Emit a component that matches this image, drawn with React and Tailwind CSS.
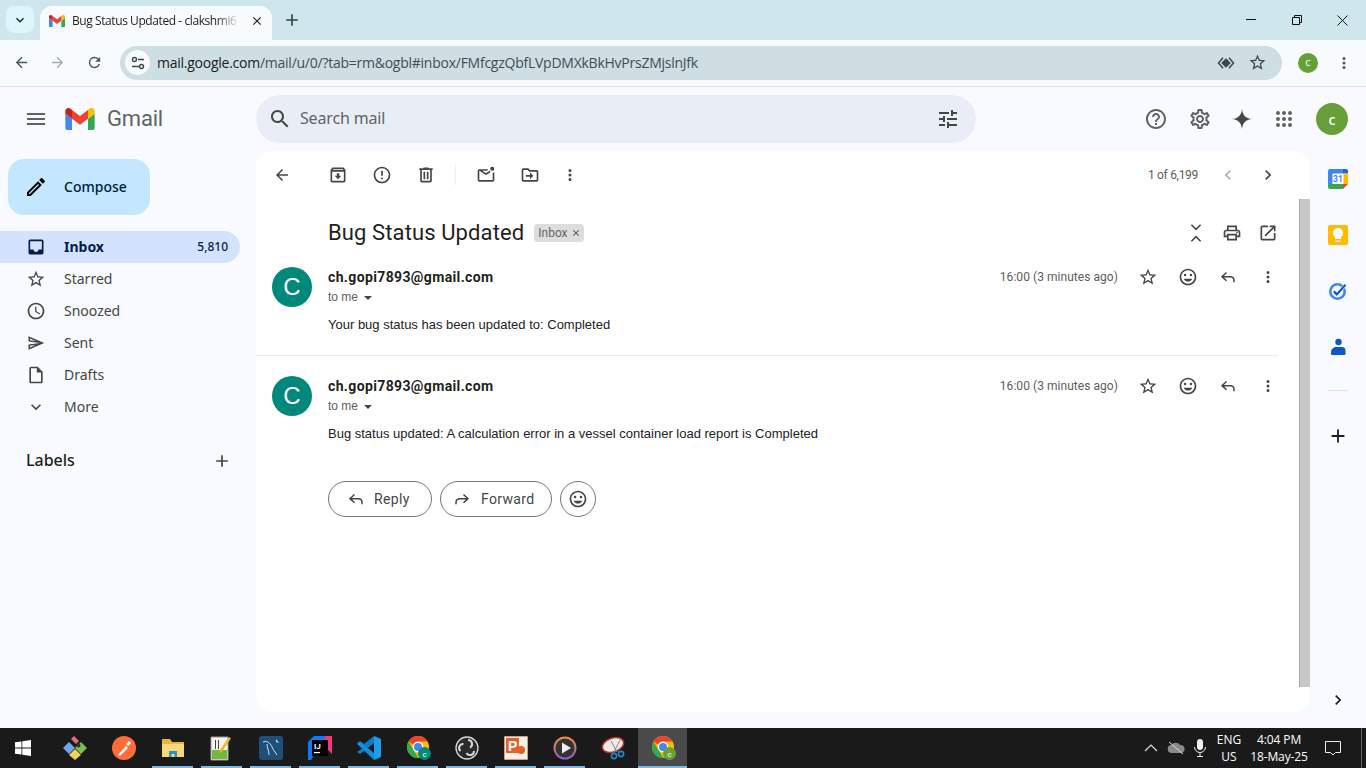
const P = {
  menu: "M3 18h18v-2H3v2zm0-5h18v-2H3v2zm0-7v2h18V6H3z",
  search: "M15.5 14h-.79l-.28-.27C15.41 12.59 16 11.11 16 9.5 16 5.91 13.09 3 9.5 3S3 5.91 3 9.5 5.91 16 9.5 16c1.61 0 3.09-.59 4.23-1.57l.27.28v.79l5 4.99L20.49 19l-4.99-5zm-6 0C7.01 14 5 11.99 5 9.5S7.01 5 9.5 5 14 7.01 14 9.5 11.99 14 9.5 14z",
  tune: "M3 17v2h6v-2H3zM3 5v2h10V5H3zm10 16v-2h8v-2h-8v-2h-2v6h2zM7 9v2H3v2h4v2h2V9H7zm14 4v-2H11v2h10zm-6-4h2V7h4V5h-4V3h-2v6z",
  help: "M11 18h2v-2h-2v2zm1-16C6.48 2 2 6.48 2 12s4.48 10 10 10 10-4.48 10-10S17.52 2 12 2zm0 18c-4.41 0-8-3.59-8-8s3.59-8 8-8 8 3.59 8 8-3.59 8-8 8zm0-14c-2.21 0-4 1.79-4 4h2c0-1.1.9-2 2-2s2 .9 2 2c0 2-3 1.75-3 5h2c0-2.25 3-2.5 3-5 0-2.21-1.79-4-4-4z",
  settings: "M19.43 12.98c.04-.32.07-.64.07-.98 0-.34-.03-.66-.07-.98l2.11-1.65c.19-.15.24-.42.12-.64l-2-3.46c-.09-.16-.26-.25-.44-.25-.06 0-.12.01-.17.03l-2.49 1c-.52-.4-1.08-.73-1.69-.98l-.38-2.65C14.46 2.18 14.25 2 14 2h-4c-.25 0-.46.18-.49.42l-.38 2.65c-.61.25-1.17.59-1.69.98l-2.49-1c-.06-.02-.12-.03-.18-.03-.17 0-.34.09-.43.25l-2 3.46c-.13.22-.07.49.12.64l2.11 1.65c-.04.32-.07.65-.07.98 0 .33.03.66.07.98l-2.11 1.65c-.19.15-.24.42-.12.64l2 3.46c.09.16.26.25.44.25.06 0 .12-.01.17-.03l2.49-1c.52.4 1.08.73 1.69.98l.38 2.65c.03.24.24.42.49.42h4c.25 0 .46-.18.49-.42l.38-2.65c.61-.25 1.17-.59 1.69-.98l2.49 1c.06.02.12.03.18.03.17 0 .34-.09.43-.25l2-3.46c.12-.22.07-.49-.12-.64l-2.11-1.65zm-1.98-1.71c.04.31.05.52.05.73 0 .21-.02.43-.05.73l-.14 1.13.89.7 1.08.84-.7 1.21-1.27-.51-1.04-.42-.9.68c-.43.32-.84.56-1.25.73l-1.06.43-.16 1.13-.2 1.35h-1.4l-.19-1.35-.16-1.13-1.06-.43c-.43-.18-.83-.41-1.23-.71l-.91-.7-1.06.43-1.27.51-.7-1.21 1.08-.84.89-.7-.14-1.13c-.03-.31-.05-.54-.05-.74s.02-.43.05-.73l.14-1.13-.89-.7-1.08-.84.7-1.21 1.27.51 1.04.42.9-.68c.43-.32.84-.56 1.25-.73l1.06-.43.16-1.13.2-1.35h1.39l.19 1.35.16 1.13 1.06.43c.43.18.83.41 1.23.71l.91.7 1.06-.43 1.27-.51.7 1.21-1.07.85-.89.7.14 1.13zM12 8c-2.21 0-4 1.79-4 4s1.79 4 4 4 4-1.79 4-4-1.79-4-4-4zm0 6c-1.1 0-2-.9-2-2s.9-2 2-2 2 .9 2 2-.9 2-2 2z",
  spark: "M12 1C12.6 7.8 16.2 11.4 23 12 16.2 12.6 12.6 16.2 12 23 11.4 16.2 7.8 12.6 1 12 7.8 11.4 11.4 7.8 12 1Z",
  back: "M20 11H7.83l5.59-5.59L12 4l-8 8 8 8 1.41-1.41L7.83 13H20v-2z",
  forward: "M4 11h12.17l-5.59-5.59L12 4l8 8-8 8-1.41-1.41L16.17 13H4v-2z",
  reload: "M17.65 6.35A7.96 7.96 0 0 0 12 4a8 8 0 1 0 7.73 10h-2.08A6 6 0 1 1 12 6c1.66 0 3.14.69 4.22 1.78L13 11h7V4l-2.35 2.35z",
  archive: "M20.54 5.23l-1.39-1.68C18.88 3.21 18.47 3 18 3H6c-.47 0-.88.21-1.16.55L3.46 5.23C3.17 5.57 3 6.02 3 6.5V19c0 1.1.9 2 2 2h14c1.1 0 2-.9 2-2V6.5c0-.48-.17-.93-.46-1.27zM6.24 5h11.52l.83 1H5.42l.82-1zM5 19V8h14v11H5zm8.45-9h-2.9v3H8l4 4 4-4h-2.55z",
  report: "M11 15h2v2h-2zm0-8h2v6h-2zm.99-5C6.47 2 2 6.48 2 12s4.47 10 9.99 10C17.52 22 22 17.52 22 12S17.52 2 11.99 2zM12 20c-4.42 0-8-3.58-8-8s3.58-8 8-8 8 3.58 8 8-3.58 8-8 8z",
  del: "M15 4V3H9v1H4v2h1v13c0 1.1.9 2 2 2h10c1.1 0 2-.9 2-2V6h1V4h-5zm2 15H7V6h10v13zM9 8h2v9H9zm4 0h2v9h-2z",
  unread: "M20 9v9H4V7h10V5H4c-1.1 0-2 .9-2 2v11c0 1.1.9 2 2 2h16c1.1 0 2-.9 2-2V9h-2zM4 7l8 5 5-3.1V6.6L12 9.7 4 5v2zm15.5-5a2.5 2.5 0 1 0 0 5 2.5 2.5 0 0 0 0-5z",
  move: "M20 6h-8l-2-2H4c-1.1 0-2 .9-2 2v12c0 1.1.9 2 2 2h16c1.1 0 2-.9 2-2V8c0-1.1-.9-2-2-2zm0 12H4V6h5.17l2 2H20v10zm-8-1v-3H7v-2h5V9l4 4-4 4z",
  more: "M12 8a2 2 0 1 0 0-4 2 2 0 0 0 0 4zm0 2a2 2 0 1 0 0 4 2 2 0 0 0 0-4zm0 6a2 2 0 1 0 0 4 2 2 0 0 0 0-4z",
  left: "M15.41 7.41L14 6l-6 6 6 6 1.41-1.41L10.83 12z",
  right: "M8.59 16.59L10 18l6-6-6-6-1.41 1.41L13.17 12z",
  down: "M7.41 8.59L12 13.17l4.59-4.58L18 10l-6 6-6-6z",
  print: "M19 8h-1V3H6v5H5c-1.66 0-3 1.34-3 3v6h4v4h12v-4h4v-6c0-1.66-1.34-3-3-3zM8 5h8v3H8V5zm8 14H8v-4h8v4zm4-4h-2v-2H6v2H4v-4c0-.55.45-1 1-1h14c.55 0 1 .45 1 1v4zm-2-4.5a1 1 0 1 0 0 2 1 1 0 0 0 0-2z",
  open: "M19 19H5V5h7V3H5c-1.11 0-2 .9-2 2v14c0 1.1.89 2 2 2h14c1.1 0 2-.9 2-2v-7h-2v7zM14 3v2h3.59l-9.83 9.83 1.41 1.41L19 6.41V10h2V3h-7z",
  star: "M22 9.24l-7.19-.62L12 2 9.19 8.63 2 9.24l5.46 4.73L5.82 21 12 17.27 18.18 21l-1.63-7.03L22 9.24zM12 15.4l-3.76 2.27 1-4.28-3.32-2.88 4.38-.38L12 6.1l1.71 4.04 4.38.38-3.32 2.88 1 4.28L12 15.4z",
  smile: "M12 2C6.47 2 2 6.48 2 12s4.47 10 10 10 10-4.48 10-10S17.53 2 12 2zm0 18c-4.42 0-8-3.58-8-8s3.58-8 8-8 8 3.58 8 8-3.58 8-8 8zM8.5 8a1.5 1.5 0 1 0 0 3 1.5 1.5 0 0 0 0-3zm7 0a1.5 1.5 0 1 0 0 3 1.5 1.5 0 0 0 0-3zM12 17.5c2.33 0 4.31-1.46 5.11-3.5H6.89c.8 2.04 2.78 3.5 5.11 3.5z",
  clock: "M11.99 2C6.47 2 2 6.48 2 12s4.47 10 9.99 10C17.52 22 22 17.52 22 12S17.52 2 11.99 2zM12 20c-4.42 0-8-3.58-8-8s3.58-8 8-8 8 3.58 8 8-3.58 8-8 8zm.5-13H11v6l5.25 3.15.75-1.23-4.5-2.67z",
  inbox: "M19 3H5c-1.1 0-2 .9-2 2v14c0 1.1.9 2 2 2h14c1.1 0 2-.9 2-2V5c0-1.1-.9-2-2-2zm0 12h-4c0 1.66-1.35 3-3 3s-3-1.34-3-3H5V5h14v10z",
  sent: "M4.01 6.03l7.51 3.22-7.52-1 .01-2.22m7.5 8.72L4 17.97v-2.22l7.51-1M2.01 3L2 10l15 2-15 2 .01 7L23 12 2.01 3z",
  draft: "M14 2H6c-1.1 0-1.99.9-1.99 2L4 20c0 1.1.89 2 1.99 2H18c1.1 0 2-.9 2-2V8l-6-6zM6 20V4h7v5h5v11H6z",
  edit: "M14.06 9.02l.92.92L5.92 19H5v-.92l9.06-9.06M17.66 3c-.25 0-.51.1-.7.29l-1.83 1.83 3.75 3.75 1.83-1.83c.39-.39.39-1.02 0-1.41l-2.34-2.34c-.2-.2-.45-.29-.71-.29zm-3.6 3.19L3 17.25V21h3.75L17.81 9.94l-3.75-3.75z",
  plus: "M19 13h-6v6h-2v-6H5v-2h6V5h2v6h6v2z",
  close: "M19 6.41L17.59 5 12 10.59 6.41 5 5 6.41 10.59 12 5 17.59 6.41 19 12 13.41 17.59 19 19 17.59 13.41 12z",
  apps: "M6 8a2 2 0 1 0 0-4 2 2 0 0 0 0 4zm6 12a2 2 0 1 0 0-4 2 2 0 0 0 0 4zm-6 0a2 2 0 1 0 0-4 2 2 0 0 0 0 4zm0-6a2 2 0 1 0 0-4 2 2 0 0 0 0 4zm6 0a2 2 0 1 0 0-4 2 2 0 0 0 0 4zm6-10a2 2 0 1 0 0 4 2 2 0 0 0 0-4zm-6 4a2 2 0 1 0 0-4 2 2 0 0 0 0 4zm6 6a2 2 0 1 0 0-4 2 2 0 0 0 0 4zm0 6a2 2 0 1 0 0-4 2 2 0 0 0 0 4z",
};

function Icon({ d, size = 20, className = "" }) {
  return (
    <svg width={size} height={size} viewBox="0 0 24 24" fill="currentColor" className={`shrink-0 ${className}`}>
      <path d={d} />
    </svg>
  );
}

function Box({ d, className = "w-10", size = 20, color = "text-[#444746]" }) {
  return (
    <div className={`flex h-10 items-center justify-center ${className} ${color}`}>
      <Icon d={d} size={size} />
    </div>
  );
}

function ReplyIcon({ size = 20, flip = false, className = "" }) {
  return (
    <svg width={size} height={size} viewBox="0 0 24 24" fill="none" stroke="currentColor" strokeWidth="2" className={`shrink-0 ${flip ? "-scale-x-100" : ""} ${className}`}>
      <path d="M10 6l-6 5.5 6 5.5M4 11.5h11c3 0 5 2 5 5V19" />
    </svg>
  );
}

function GmailM({ className }) {
  return (
    <svg viewBox="52 42 88 66" className={className}>
      <path fill="#4285f4" d="M58 108h14V74L52 59v43c0 3.32 2.69 6 6 6" />
      <path fill="#34a853" d="M120 108h14c3.32 0 6-2.69 6-6V59l-20 15" />
      <path fill="#fbbc04" d="M120 48v26l20-15v-8c0-7.42-8.47-11.65-14.4-7.2" />
      <path fill="#ea4335" d="M72 74V48l24 18 24-18v26L96 92" />
      <path fill="#c5221f" d="M52 51v8l20 15V48l-5.6-4.2c-5.94-4.45-14.4-.22-14.4 7.2" />
    </svg>
  );
}

function TopBar() {
  return (
    <div className="flex h-10 shrink-0 items-end bg-[#cfe6ec] font-['Open_Sans',sans-serif]">
      <div className="mb-[7px] ml-[6px] flex h-[27px] w-[28px] items-center justify-center rounded-lg bg-[#dcf6fc] text-[#1f1f1f]">
        <Icon d={P.down} size={16} />
      </div>
      <div className="ml-[6px] flex h-[34px] w-[232px] items-center rounded-t-xl bg-[#f7fbfe] pb-[5px] pl-[9px] pr-[8px]">
        <GmailM className="h-[12px] w-[16px] shrink-0" />
        <span className="ml-[7px] w-[168px] shrink-0 whitespace-nowrap text-[12px] tracking-[-0.42px] text-[#1f1f1f] [mask-image:linear-gradient(to_right,black_86%,transparent)]">
          Bug Status Updated - clakshmi6
        </span>
        <Icon d={P.close} size={14} className="ml-[10px] text-[#1f1f1f]" />
      </div>
      <div className="mb-[10px] ml-[10px] text-[#374548]">
        <Icon d={P.plus} size={20} />
      </div>
      <div className="ml-auto flex h-full items-start pb-px text-[#111]">
        <div className="flex h-[38px] w-[46px] items-center justify-center">
          <div className="h-px w-[10px] bg-[#111]" />
        </div>
        <div className="flex h-10 w-[46px] items-center justify-center">
          <svg width="10" height="10" viewBox="0 0 10 10" fill="none" stroke="currentColor">
            <path d="M.5 2.5h7v7h-7zM2.5 2.5v-2h7v7h-2" />
          </svg>
        </div>
        <div className="flex h-10 w-[46px] items-center justify-center pr-px">
          <svg width="11" height="11" viewBox="0 0 11 11" fill="none" stroke="currentColor">
            <path d="M.5.5l10 10M10.5.5l-10 10" />
          </svg>
        </div>
      </div>
    </div>
  );
}

function AddressBar() {
  return (
    <div className="flex h-[47px] shrink-0 items-center rounded-tl-lg border-b border-[#d9e5e9] bg-[#f7fbfe] pb-px font-['Open_Sans',sans-serif]">
      <Icon d={P.back} size={17} className="ml-[13px] text-[#46585c]" />
      <Icon d={P.forward} size={17} className="ml-[19px] text-[#a4acae]" />
      <Icon d={P.reload} size={17} className="ml-[20px] text-[#46585c]" />
      <div className="ml-[17px] flex h-[34px] w-[1162px] items-center rounded-full bg-[#cfdee3] pl-[5px] pr-[15px]">
        <div className="flex h-[25px] w-[25px] items-center justify-center rounded-full bg-[#f7fbfe] text-[#3c4a4e]">
          <svg width="16" height="16" viewBox="0 0 16 16" fill="none" stroke="currentColor" strokeWidth="1.4">
            <circle cx="4.5" cy="4.5" r="2" />
            <circle cx="11.5" cy="11.5" r="2" />
            <path d="M8 4.5h6M2 11.5h7" />
          </svg>
        </div>
        <div className="ml-[7px] whitespace-nowrap text-[14px] leading-5 tracking-[-0.25px] text-[#3f4f53]">
          <span className="text-[#162124]">mail.google.com</span>/mail/u/0/?tab=rm&amp;ogbl#inbox/FMfcgzQbfLVpDMXkBkHvPrsZMjslnJfk
        </div>
        <svg width="18" height="18" viewBox="0 0 24 24" fill="none" stroke="#3c4a4e" strokeWidth="2" className="ml-auto">
          <path d="M8 5L2 12l6 7M16 5l6 7-6 7" />
          <path d="M12 7l5 5-5 5-5-5z" fill="#3c4a4e" />
        </svg>
        <Icon d={P.star} size={19} className="ml-[13px] text-[#3c4a4e]" />
      </div>
      <div className="ml-[16px] flex h-5 w-5 items-center justify-center rounded-full bg-[#689f38] text-[11px] text-white">c</div>
      <Icon d={P.more} size={18} className="ml-[17px] text-[#46585c]" />
    </div>
  );
}

function GmailHeader() {
  return (
    <div className="flex h-16 shrink-0 items-center">
      <Icon d={P.menu} size={24} className="ml-6 text-[#5f6368]" />
      <GmailM className="ml-[17px] h-[22px] w-[30px]" />
      <span className="ml-3 font-['Roboto',sans-serif] text-[22px] leading-none tracking-[-0.2px] text-[#5f6368]">Gmail</span>
      <div className="ml-[93px] flex h-12 w-[720px] items-center rounded-3xl bg-[#e9eef6] pl-[12px] pr-[16px]">
        <Icon d={P.search} size={24} className="text-[#444746]" />
        <span className="ml-[8px] pb-[2px] text-[16px] tracking-[-0.15px] text-[#5f6368]">Search mail</span>
        <Icon d={P.tune} size={24} className="ml-auto text-[#444746]" />
      </div>
      <Icon d={P.help} size={24} className="ml-[168px] text-[#5f6368]" />
      <Icon d={P.settings} size={24} className="ml-5 text-[#5f6368]" />
      <Icon d={P.spark} size={22} className="ml-[19px] text-[#444746]" />
      <Icon d={P.apps} size={24} className="ml-[19px] text-[#5f6368]" />
      <div className="ml-5 flex h-8 w-8 items-center justify-center rounded-full bg-[#689f38] text-[14px] font-medium text-white">c</div>
    </div>
  );
}

const navItems = [
  { label: "Starred", d: P.star },
  { label: "Snoozed", d: P.clock },
  { label: "Sent", d: P.sent },
  { label: "Drafts", d: P.draft },
  { label: "More", d: P.down },
];

function Sidebar() {
  return (
    <div className="w-64 shrink-0 pt-2">
      <div className="ml-2 flex h-14 w-[142px] items-center rounded-2xl bg-[#c2e7ff] pl-4 text-[14px] font-medium text-[#001d35]">
        <Icon d={P.edit} size={24} className="text-black" />
        <span className="ml-4 pb-[2px]">Compose</span>
      </div>
      <div className="mt-4 w-60">
        <div className="flex h-8 items-center rounded-r-full bg-[#d3e3fd] pl-[26px] pr-3 text-[#041e49]">
          <Icon d={P.inbox} size={20} />
          <span className="ml-[18px] pb-[2px] text-[14px] font-bold">Inbox</span>
          <span className="ml-auto text-[12px] font-medium">5,810</span>
        </div>
        {navItems.map((item) => (
          <div key={item.label} className="flex h-8 items-center pl-[26px] text-[#444746]">
            <Icon d={item.d} size={item.label === "Sent" ? 18 : 20} className={item.label === "Sent" ? "mx-px" : ""} />
            <span className="ml-[18px] pb-[2px] text-[14px]">{item.label}</span>
          </div>
        ))}
      </div>
      <div className="mt-[26px] flex h-6 items-center pl-[26px] pr-[24px] text-[#1f1f1f]">
        <span className="pb-[2px] text-[16px] font-medium">Labels</span>
        <Icon d={P.plus} size={20} className="ml-auto text-[#444746]" />
      </div>
    </div>
  );
}

function Message({ body, first }) {
  return (
    <div className={`flex pl-4 ${first ? "h-[88px]" : "mt-5"}`}>
      <div className="flex h-10 w-10 shrink-0 items-center justify-center rounded-full bg-[#00897b] font-['Liberation_Sans',sans-serif] text-[24px] text-white">C</div>
      <div className="ml-4 flex-1">
        <div className="text-[14px] font-bold leading-5 tracking-[0.37px] text-[#1f1f1f]">ch.gopi7893@gmail.com</div>
        <div className="flex h-[20px] items-center font-['Liberation_Sans',sans-serif] text-[12px] text-[#5e5e5e]">
          to me
          <span className="ml-[6px] mt-px h-0 w-0 border-x-[4px] border-t-[4px] border-x-transparent border-t-[#444746]" />
        </div>
        <div className="mt-[8px] font-['Liberation_Sans',sans-serif] text-[13px] leading-5 text-[#222]">{body}</div>
      </div>
      <div className="flex h-5 items-center pr-[11px]">
        <span className="text-[12px] tracking-[0.05px] text-[#5e5e5e]">16:00 (3 minutes ago)</span>
        <Box d={P.star} className="ml-[10px] w-10" />
        <Box d={P.smile} />
        <div className="flex h-10 w-10 items-center justify-center text-[#444746]"><ReplyIcon size={18} /></div>
        <Box d={P.more} size={18} />
      </div>
    </div>
  );
}

function PillButton({ label, flip, className, textClass }) {
  return (
    <div className={`flex h-9 items-center rounded-full border border-[#747775] text-[14px] tracking-[0.35px] text-[#444746] ${className}`}>
      <ReplyIcon size={18} flip={flip} />
      <span className={textClass}>{label}</span>
    </div>
  );
}

function MailCard() {
  return (
    <div className="flex min-w-0 flex-1 flex-col overflow-hidden rounded-2xl bg-white font-['Roboto',sans-serif]">
      <div className="flex h-12 shrink-0 items-center pl-1 pr-[22px]">
        <Box d={P.back} className="w-11" size={18} />
        <Box d={P.archive} className="ml-3 w-11" />
        <Box d={P.report} className="w-11" />
        <Box d={P.del} className="w-11" />
        <div className="ml-[7px] h-5 w-px bg-[#eceff1]" />
        <Box d={P.unread} className="ml-2 w-11" />
        <Box d={P.move} className="w-11" />
        <Box d={P.more} className="-ml-[2px] w-10" size={18} />
        <span className="ml-auto mr-[10px] text-[12px] tracking-[-0.3px] text-[#5e5e5e]">1 of 6,199</span>
        <Box d={P.left} color="text-[#b0b3b5]" />
        <Box d={P.right} />
      </div>
      <div className="flex min-h-0 flex-1">
        <div className="min-w-0 flex-1">
          <div className="flex h-[68px] items-center pl-[72px]">
            <span className="text-[22px] leading-7 tracking-[0.11px] text-[#1f1f1f]">Bug Status Updated</span>
            <span className="ml-[10px] flex h-[18px] items-center rounded-[4px] bg-[#dddddd] pl-[4px] pr-[3px] text-[12px] text-[#666]">
              Inbox
              <Icon d={P.close} size={10} className="ml-[3px] text-[#444]" />
            </span>
            <div className="ml-auto flex h-10 w-9 items-center justify-center text-[#444746]">
              <svg width="22" height="22" viewBox="0 0 24 24" fill="none" stroke="currentColor" strokeWidth="1.7">
                <path d="M7 3l5 5 5-5M7 21l5-5 5 5" />
              </svg>
            </div>
            <Box d={P.print} className="w-9" />
            <Box d={P.open} className="mr-[13px] w-9" />
          </div>
          <Message first body="Your bug status has been updated to: Completed" />
          <div className="mr-[21px] h-px bg-[#e8eaed]" />
          <Message body="Bug status updated: A calculation error in a vessel container load report is Completed" />
          <div className="ml-[72px] mt-[37px] flex gap-2">
            <PillButton label="Reply" className="w-[104px] pl-[18px]" textClass="ml-[9px]" />
            <PillButton label="Forward" flip className="w-[112px] pl-[12px]" textClass="ml-[10px]" />
            <div className="flex h-9 w-9 items-center justify-center rounded-full border border-[#747775] text-[#444746]">
              <Icon d={P.smile} size={20} />
            </div>
          </div>
        </div>
        <div className="mb-[25px] w-[11px] shrink-0 border-l border-[#a8a8a8] bg-[#c8c8c8]" />
      </div>
    </div>
  );
}

function AppRail() {
  return (
    <div className="flex w-14 shrink-0 flex-col items-center">
      <svg width="20" height="20" viewBox="0 0 20 20" className="mt-[18px]">
        <rect x="0" y="0" width="20" height="20" rx="2" fill="#fff" />
        <path d="M2 0h13v4.5H4.5V15H0V2a2 2 0 0 1 2-2z" fill="#4285f4" />
        <path d="M15 0h3a2 2 0 0 1 2 2v2.5h-5z" fill="#1967d2" />
        <path d="M15.5 4.5H20V15h-4.5z" fill="#fbbc04" />
        <path d="M0 15h15v5H2a2 2 0 0 1-2-2z" fill="#34a853" />
        <path d="M15 15h5l-5 5z" fill="#ea4335" />
        <text x="10" y="13" textAnchor="middle" fontSize="8.5" fontWeight="700" fill="#4285f4" fontFamily="Roboto,sans-serif">31</text>
      </svg>
      <div className="mt-9 flex h-5 w-5 items-center justify-center rounded-[2px] bg-[#ffbb00]">
        <svg width="12" height="15" viewBox="0 0 12 15" fill="#fff">
          <path d="M6 0a5 5 0 0 1 3 9v2H3V9a5 5 0 0 1 3-9zM3.5 12.5h5V14h-5z" />
        </svg>
      </div>
      <svg width="20" height="20" viewBox="0 0 20 20" fill="none" className="mt-9">
        <circle cx="9.5" cy="10.5" r="7.2" stroke="#4285f4" strokeWidth="2.6" />
        <path d="M5.8 10.4l3 3 8.7-9.6" stroke="#fff" strokeWidth="3.4" />
        <path d="M5.8 10.4l3 3 8.7-9.6" stroke="#0b57d0" strokeWidth="2.2" />
      </svg>
      <svg width="20" height="20" viewBox="0 0 20 20" className="mt-9">
        <circle cx="10.5" cy="5" r="3.2" fill="#0b57d0" />
        <path d="M7 10h7a3.5 3.5 0 0 1 3.5 3.5V17a1 1 0 0 1-1 1H4a1 1 0 0 1-1-1v-1a6 6 0 0 1 4-6z" fill="#0b57d0" />
      </svg>
      <div className="mt-[33px] h-px w-5 bg-[#dfe1e5]" />
      <Icon d={P.plus} size={22} className="mt-[34px] text-[#1f1f1f]" />
      <Icon d={P.right} size={20} className="mb-[2px] mt-auto text-[#1f1f1f]" />
    </div>
  );
}

function Chrome({ badge, letter = "c" }) {
  return (
    <svg width="26" height="26" viewBox="0 0 26 26" className="ml-[2px]">
      <circle cx="12" cy="12" r="11" fill="#fbbc04" />
      <path d="M12 1a11 11 0 0 1 9.5 5.5H12a5.5 5.5 0 0 0-5 3L2.5 6.5A11 11 0 0 1 12 1z" fill="#ea4335" />
      <path d="M2.5 6.5L7.5 15l5 8A11 11 0 0 1 2.5 6.5z" fill="#34a853" />
      <circle cx="12" cy="12" r="5.2" fill="#fff" />
      <circle cx="12" cy="12" r="4" fill="#4285f4" />
      <circle cx="18.5" cy="18.5" r="6.5" fill={badge} />
      <text x="18.5" y="21.5" textAnchor="middle" fontSize="8" fill="#fff" fontFamily="Roboto,sans-serif">{letter}</text>
    </svg>
  );
}

const taskIcons = [
  { key: "git", line: false, el: (
    <svg width="26" height="26" viewBox="0 0 26 26">
      <path d="M9 4l3-3 5 5-3 3z" fill="#e86a7a" />
      <path d="M7 7l6 6-6 6-6-6z" fill="#6ea6f0" />
      <path d="M19 7l6 6-6 6-6-6z" fill="#7cc04f" />
      <path d="M13 14l6 6-6 5-6-5z" fill="#f1d35c" />
      <circle cx="16.5" cy="10.5" r="2" fill="#333" />
    </svg>
  ) },
  { key: "postman", line: false, el: (
    <svg width="26" height="26" viewBox="0 0 26 26">
      <circle cx="13" cy="13" r="12" fill="#ff6c37" />
      <path d="M7 20l8-9 2 2-8 8zM15 9l3-3 2 2-3 3z" fill="#fff" />
    </svg>
  ) },
  { key: "files", line: true, el: (
    <svg width="24" height="22" viewBox="0 0 24 22">
      <path d="M1 2h8l2 3h12v15H1z" fill="#e9b53d" />
      <path d="M1 7h22v13H1z" fill="#f9d977" />
      <path d="M8 20v-6h8v6h-2.5v-3h-3v3z" fill="#2b8fd8" />
    </svg>
  ) },
  { key: "notepad", line: true, el: (
    <svg width="24" height="26" viewBox="0 0 24 26">
      <path d="M1 2h17v23H1z" fill="#f3f5e8" stroke="#999" />
      <path d="M2 15h15v9H2z" fill="#72b83c" />
      <path d="M5 5h1v9H5zM8 5h1v9H8z" fill="#444" />
      <path d="M10 15l9-13 2 1.5-9 13-3 1.5z" fill="#f0b429" />
    </svg>
  ) },
  { key: "mysql", line: true, el: (
    <svg width="24" height="24" viewBox="0 0 24 24">
      <rect width="24" height="24" rx="3" fill="#1f4f78" />
      <path d="M4 6c5-2 8 2 10 7l4 6M8 8c0 4 2 6 2 11" fill="none" stroke="#cfe0ea" strokeWidth="1" />
      <path d="M17 3l3 4-3-1z" fill="#cfe0ea" />
    </svg>
  ) },
  { key: "idea", line: true, el: (
    <svg width="24" height="24" viewBox="0 0 24 24">
      <path d="M6 0h18v18z" fill="#ee3a78" />
      <path d="M0 6l6-6h12L3 24H0z" fill="#087cfa" />
      <rect x="4" y="4" width="16" height="16" fill="#000" />
      <text x="6" y="13" fontSize="8" fontWeight="700" fill="#fff" fontFamily="Roboto,sans-serif">IJ</text>
      <rect x="6" y="16" width="6" height="1.2" fill="#fff" />
    </svg>
  ) },
  { key: "vscode", line: true, el: (
    <svg width="26" height="26" viewBox="0 0 26 26">
      <path d="M18 1l7 3v18l-7 3z" fill="#1f9cf0" />
      <path d="M18 1v7L8 16l-4 3-3-2 6-4-6-5 3-2 4 3z" fill="#0a7cc9" />
      <path d="M18 25v-7L8 10 4 7 1 9l15 14z" fill="#0f8fe0" />
    </svg>
  ) },
  { key: "chrome1", line: true, el: <Chrome badge="#00897b" /> },
  { key: "obs", line: true, el: (
    <svg width="24" height="24" viewBox="0 0 24 24" fill="none">
      <circle cx="12" cy="12" r="11" fill="#2b2b2b" stroke="#d8d8d8" strokeWidth="1.3" />
      <path d="M13 4a4 4 0 0 1 2 7.5M19 15a4 4 0 0 1-7.5 2M5.5 15a4 4 0 0 1 3-7" stroke="#d8d8d8" strokeWidth="2" />
    </svg>
  ) },
  { key: "ppt", line: true, el: (
    <svg width="24" height="24" viewBox="0 0 24 24">
      <rect width="24" height="24" fill="#f7f1e8" stroke="#c8401b" />
      <path d="M2 2h13v15H2z" fill="#e2622b" />
      <text x="4" y="15" fontSize="14" fontWeight="700" fill="#fff" fontFamily="Liberation Sans,sans-serif">P</text>
      <circle cx="17" cy="14" r="4" fill="#e2622b" />
    </svg>
  ) },
  { key: "player", line: true, el: (
    <svg width="24" height="24" viewBox="0 0 24 24">
      <defs>
        <linearGradient id="ring" x1="0" y1="0" x2="0" y2="1">
          <stop offset="0" stopColor="#f08a3c" />
          <stop offset="1" stopColor="#8f5bd0" />
        </linearGradient>
      </defs>
      <circle cx="12" cy="12" r="10.5" fill="#333" stroke="url(#ring)" strokeWidth="2" />
      <path d="M9 6.5l9 5.5-9 5.5z" fill="#eee" />
    </svg>
  ) },
  { key: "snip", line: false, el: (
    <svg width="26" height="24" viewBox="0 0 26 24">
      <ellipse cx="12" cy="9" rx="11" ry="7" fill="#f0e8e6" stroke="#b0332f" strokeWidth="1.5" transform="rotate(-20 12 9)" />
      <path d="M10 5l6 11M19 4l-6 12" stroke="#888" fill="none" />
      <circle cx="13" cy="20" r="2.6" fill="none" stroke="#1e88d2" strokeWidth="1.6" />
      <circle cx="20" cy="18" r="2.6" fill="none" stroke="#1e88d2" strokeWidth="1.6" />
    </svg>
  ) },
];

function Taskbar() {
  return (
    <div className="flex h-10 shrink-0 items-stretch bg-[#1a1a1a] font-['Open_Sans',sans-serif] text-white">
      <div className="flex w-[50px] items-center justify-center pr-[4px]">
        <svg width="16" height="16" viewBox="0 0 16 16" fill="#fff">
          <path d="M0 2.3l6.5-.9v6.2H0zM7.3 1.3L16 0v7.6H7.3zM0 8.4h6.5v6.2L0 13.7zM7.3 8.4H16V16l-8.7-1.3z" />
        </svg>
      </div>
      {taskIcons.map((t) => (
        <div key={t.key} className="relative flex w-[49px] items-center justify-center">
          {t.el}
          {t.line && <div className="absolute inset-x-[4px] bottom-0 h-[2px] bg-[#76b9ed]" />}
        </div>
      ))}
      <div className="relative flex w-[49px] items-center justify-center bg-[#4a4a4a]">
        <Chrome badge="#689f38" />
        <div className="absolute inset-x-0 bottom-0 h-[2px] bg-[#76b9ed]" />
      </div>
      <div className="ml-auto flex items-center">
        <svg width="14" height="8" viewBox="0 0 14 8" fill="none" stroke="#ddd" strokeWidth="1.2">
          <path d="M1 7l6-6 6 6" />
        </svg>
        <svg width="18" height="14" viewBox="0 0 18 14" className="ml-[9px]">
          <path d="M5 12a4 4 0 0 1-.5-8A5 5 0 0 1 13 4a4 4 0 0 1 1 8z" fill="#8a8a8a" />
          <path d="M2 1l14 12" stroke="#ddd" />
        </svg>
        <svg width="14" height="18" viewBox="0 0 14 18" fill="#eee" className="ml-[8px]">
          <rect x="4" y="0" width="6" height="11" rx="3" />
          <path d="M1.5 8a5.5 5.5 0 0 0 11 0" fill="none" stroke="#eee" />
          <path d="M6.5 13.5h1V17h-1zM4 17h6v1H4z" />
        </svg>
        <div className="ml-[7px] w-[30px] text-center text-[12px] leading-[17px]">
          <div>ENG</div>
          <div>US</div>
        </div>
        <div className="ml-[4px] w-[62px] text-center text-[12px] leading-[17px] tracking-[-0.1px]">
          <div>4:04 PM</div>
          <div>18-May-25</div>
        </div>
        <svg width="16" height="16" viewBox="0 0 16 16" fill="none" stroke="#eee" className="ml-[15px]">
          <path d="M.5 1.5h15v11h-5l-2.5 2.5L5.5 12.5h-5z" />
        </svg>
        <div className="ml-[20px] h-full w-[5px] border-l border-[#666]" />
      </div>
    </div>
  );
}

export default function App() {
  return (
    <div className="flex h-[768px] w-[1366px] flex-col overflow-hidden bg-[#f8faff]">
      <TopBar />
      <AddressBar />
      <GmailHeader />
      <div className="flex min-h-0 flex-1 pb-4">
        <Sidebar />
        <MailCard />
        <AppRail />
      </div>
      <Taskbar />
    </div>
  );
}
